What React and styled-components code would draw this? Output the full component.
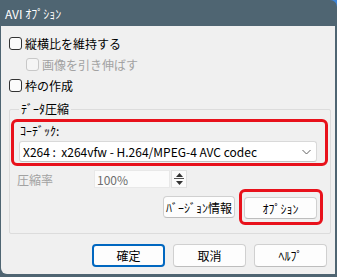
import React from "react";
import styled, { createGlobalStyle } from "styled-components";

const GlobalStyle = createGlobalStyle`
  html, body {
    margin: 0;
    padding: 0;
    background: #3f86d8;
  }
  body {
    font-family: "Noto Sans CJK JP", "Noto Sans", sans-serif;
    font-size: 12px;
    color: #000;
  }
  * {
    box-sizing: border-box;
  }
`;

const Window = styled.div`
  width: 337px;
  height: 277px;
  background: #4f6572;
  border-top-right-radius: 7px;
  display: flex;
  flex-direction: column;
  overflow: hidden;
`;

const TitleBar = styled.div`
  height: 26px;
  flex: none;
  display: flex;
  align-items: center;
  padding-left: 5px;
  color: #fff;
  font-size: 12px;
`;

const Client = styled.div`
  flex: 1;
  margin: 0 2px 3px 1px;
  background: #f0f0f0;
  border-bottom-left-radius: 6px;
  display: flex;
  flex-direction: column;
  padding-top: 7px;
`;

const CheckRow = styled.label`
  height: 21px;
  display: flex;
  align-items: center;
  padding-left: ${({ indent }) => (indent ? 25 : 8)}px;
  gap: 3px;
  color: ${({ disabled }) => (disabled ? "#a2a2a2" : "#000")};
  white-space: nowrap;
`;

const Box = styled.span`
  width: 13px;
  height: 13px;
  flex: none;
  border-radius: 3px;
  border: 1px solid ${({ disabled }) => (disabled ? "#c8c8c8" : "#333")};
  background: ${({ disabled }) => (disabled ? "#f5f5f5" : "#fbfbfb")};
`;

const Group = styled.div`
  position: relative;
  margin: 13px 4px 0 8px;
  border: 1px solid #dcdcdc;
  border-radius: 2px;
  display: flex;
  flex-direction: column;
  padding-bottom: 8px;
`;

const Legend = styled.span`
  position: absolute;
  top: -9px;
  left: 9px;
  padding: 0 2px;
  background: #f0f0f0;
  line-height: 16px;
`;

const Highlight = styled.div`
  border: 3px solid #e8111b;
  border-radius: 6px;
  margin: ${({ m }) => m};
  padding: ${({ p }) => p};
`;

const FieldLabel = styled.div`
  line-height: 14px;
  padding-left: 1px;
  margin-bottom: 3px;
`;

const Combo = styled.div`
  height: 21px;
  background: #fff;
  border: 1px solid #d9d9d9;
  border-bottom-color: #c2c2c2;
  border-radius: 3px;
  display: flex;
  align-items: center;
  justify-content: space-between;
  padding: 0 5px 0 3px;
  white-space: pre;
`;

const RateRow = styled.div`
  margin-top: 4px;
  height: 18px;
  display: flex;
  align-items: center;
  padding-left: 7px;
`;

const DimLabel = styled.span`
  width: 77px;
  color: #a2a2a2;
`;

const TextBox = styled.div`
  width: 76px;
  height: 18px;
  background: #fbfbfb;
  border: 1px solid #e8e8e8;
  display: flex;
  align-items: center;
  padding-left: 2px;
  color: #6d6d6d;
`;

const Spin = styled.div`
  margin-left: 1px;
  width: 16px;
  height: 18px;
  background: #fbfbfb;
  border: 1px solid #e0e0e0;
  display: flex;
  flex-direction: column;
  align-items: center;
  justify-content: space-around;
  padding: 1px 0;
`;

const SpinDivider = styled.span`
  width: 10px;
  height: 1px;
  background: #555;
`;

const ButtonRow = styled.div`
  display: flex;
  justify-content: flex-end;
  align-items: center;
  gap: ${({ gap }) => gap}px;
  margin: ${({ m }) => m};
`;

const Button = styled.button`
  width: ${({ w }) => w || 73}px;
  height: ${({ h }) => h || 22}px;
  padding: 0;
  font: inherit;
  color: #000;
  background: #fdfdfd;
  border: ${({ primary }) => (primary ? "2px solid #0067c0" : "1px solid #d0d0d0")};
  border-bottom-color: ${({ primary }) => (primary ? "#0067c0" : "#bdbdbd")};
  border-radius: 4px;
`;

function Chevron() {
  return (
    <svg width="9" height="6" viewBox="0 0 9 6">
      <path d="M0.5 1 L4.5 5 L8.5 1" fill="none" stroke="#606060" strokeWidth="1" />
    </svg>
  );
}

function Arrow({ down }) {
  return (
    <svg width="7" height="4" viewBox="0 0 7 4">
      <path d={down ? "M0 0 H7 L3.5 4 Z" : "M0 4 H7 L3.5 0 Z"} fill="#333" />
    </svg>
  );
}

export default function App() {
  return (
    <>
      <GlobalStyle />
      <Window>
        <TitleBar>AVI ｵﾌﾟｼｮﾝ</TitleBar>
        <Client>
          <CheckRow>
            <Box />
            縦横比を維持する
          </CheckRow>
          <CheckRow indent disabled>
            <Box disabled />
            画像を引き伸ばす
          </CheckRow>
          <CheckRow>
            <Box />
            枠の作成
          </CheckRow>

          <Group>
            <Legend>ﾃﾞｰﾀ圧縮</Legend>
            <Highlight m="9px 2px 0 1px" p="2px 8px 1px 5px">
              <FieldLabel>ｺｰﾃﾞｯｸ:</FieldLabel>
              <Combo>
                <span>X264 :  x264vfw - H.264/MPEG-4 AVC codec</span>
                <Chevron />
              </Combo>
            </Highlight>
            <RateRow>
              <DimLabel>圧縮率</DimLabel>
              <TextBox>100%</TextBox>
              <Spin>
                <Arrow />
                <SpinDivider />
                <Arrow down />
              </Spin>
            </RateRow>
            <ButtonRow gap={4} m="1px 7px 0 0">
              <Button w={72}>ﾊﾞｰｼﾞｮﾝ情報</Button>
              <Highlight m="0" p="5px 3px 3px 2px">
                <Button>ｵﾌﾟｼｮﾝ</Button>
              </Highlight>
            </ButtonRow>
          </Group>

          <ButtonRow gap={8} m="10px 8px 0 0">
            <Button primary h={23}>確定</Button>
            <Button h={23}>取消</Button>
            <Button h={23}>ﾍﾙﾌﾟ</Button>
          </ButtonRow>
        </Client>
      </Window>
    </>
  );
}
